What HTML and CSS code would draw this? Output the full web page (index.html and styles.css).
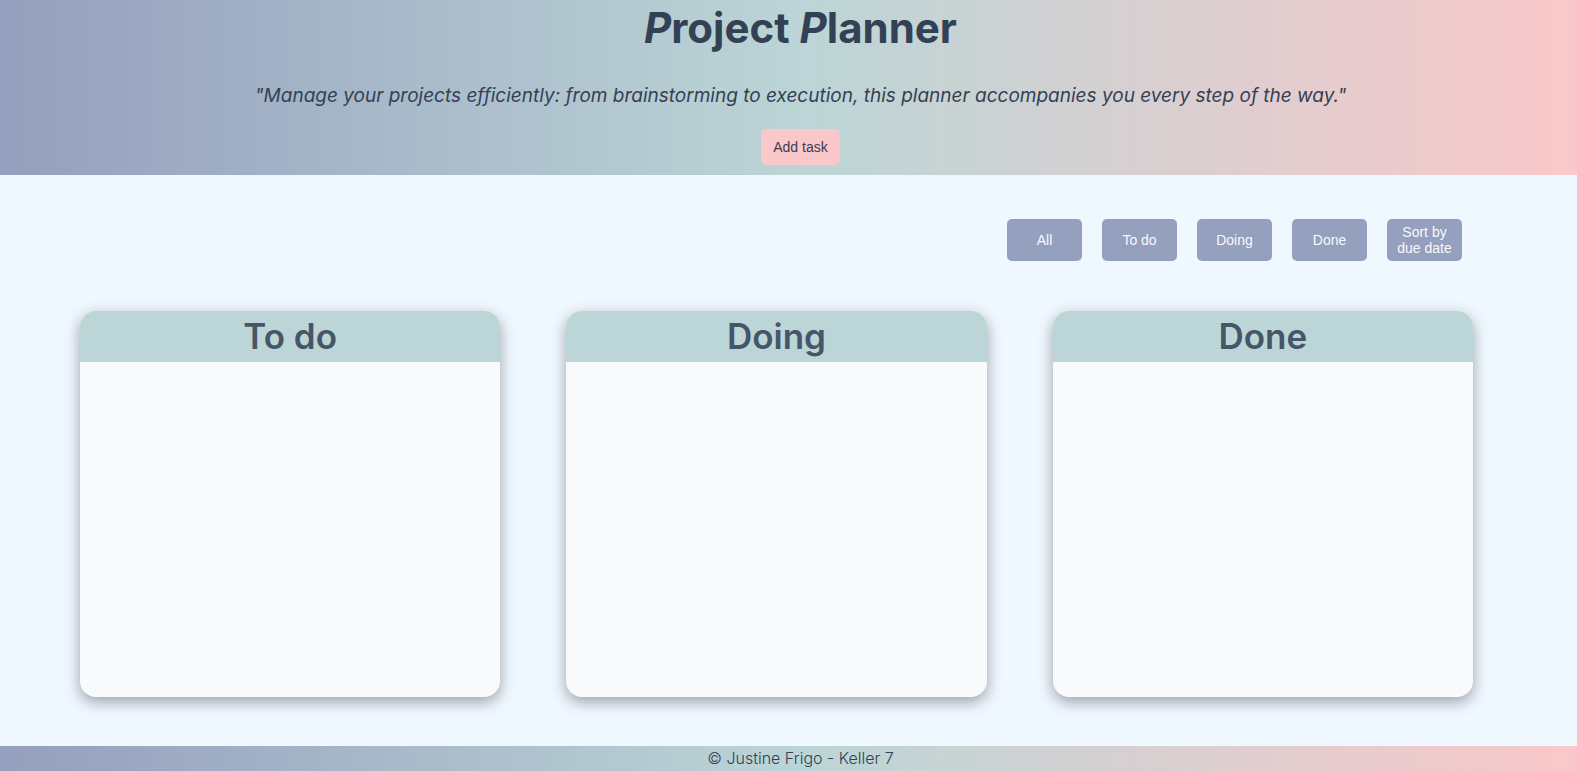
FILE: index.html
```html
<!DOCTYPE html>
<html lang="en">
<head>
<meta charset="utf-8">
<meta name="viewport" content="width=device-width, initial-scale=1">
<title>Project Planner</title>
<link rel="stylesheet" href="styles.css">
</head>
<body>
<header class="banner">
  <h1 class="title"><em>P</em>roject <em>P</em>lanner</h1>
  <p class="tagline">"Manage your projects efficiently: from brainstorming to execution, this planner accompanies you every step of the way."</p>
  <button class="add-task" type="button">Add task</button>
</header>
<main class="main">
  <nav class="filters" aria-label="Task filters">
    <button class="filter" type="button">All</button>
    <button class="filter" type="button">To do</button>
    <button class="filter" type="button">Doing</button>
    <button class="filter" type="button">Done</button>
    <button class="filter" type="button">Sort by due date</button>
  </nav>
  <div class="board">
    <section class="column"><h2 class="column-title">To do</h2></section>
    <section class="column"><h2 class="column-title">Doing</h2></section>
    <section class="column"><h2 class="column-title">Done</h2></section>
  </div>
</main>
<footer class="footer">© Justine Frigo - Keller 7</footer>
</body>
</html>
```
FILE: styles.css
```css
* {
  box-sizing: border-box;
}

body {
  margin: 0;
  min-height: 100vh;
  display: flex;
  flex-direction: column;
  background: #eff7ff;
  color: #334155;
  font-family: Inter, "Open Sans", sans-serif;
}

.banner,
.footer {
  padding-left: 24px;
  text-align: center;
  background: linear-gradient(90deg, #959fbe, #bcd5d6 51%, #fac8ca);
}

.banner {
  display: flex;
  flex-direction: column;
  align-items: center;
  padding-bottom: 10px;
}

.title {
  margin: 0;
  font-size: 42px;
  line-height: 56px;
  font-weight: 700;
}

.tagline {
  margin: 24px 0 17px;
  font-size: 19px;
  line-height: 32px;
  font-style: italic;
}

.add-task,
.filter {
  border: 0;
  border-radius: 5px;
  font-family: "Liberation Sans", Arial, sans-serif;
  font-size: 14px;
  line-height: 16px;
  cursor: pointer;
}

.add-task {
  padding: 10px 12px;
  background: #fac8ca;
  color: #334155;
}

.main {
  flex: 1;
  display: flex;
  flex-direction: column;
  gap: 50px;
  padding: 44px 104px 49px 80px;
}

.filters {
  display: flex;
  justify-content: flex-end;
  gap: 20px;
  padding-right: 11px;
}

.filter {
  width: 75px;
  min-height: 42px;
  padding: 5px 8px;
  background: #959fbe;
  color: #f8fafc;
}

.board {
  flex: 1;
  display: grid;
  grid-template-columns: repeat(3, 1fr);
  gap: 66px;
}

.column {
  overflow: hidden;
  border-radius: 16px;
  background: #f8fafc;
  box-shadow: 0 5px 15px rgba(0, 0, 0, 0.35);
}

.column-title {
  margin: 0;
  background: #bcd5d6;
  color: #475569;
  font-size: 35px;
  line-height: 51px;
  font-weight: 600;
  text-align: center;
}

.footer {
  font-size: 16px;
  line-height: 25px;
  font-weight: 300;
}
```
